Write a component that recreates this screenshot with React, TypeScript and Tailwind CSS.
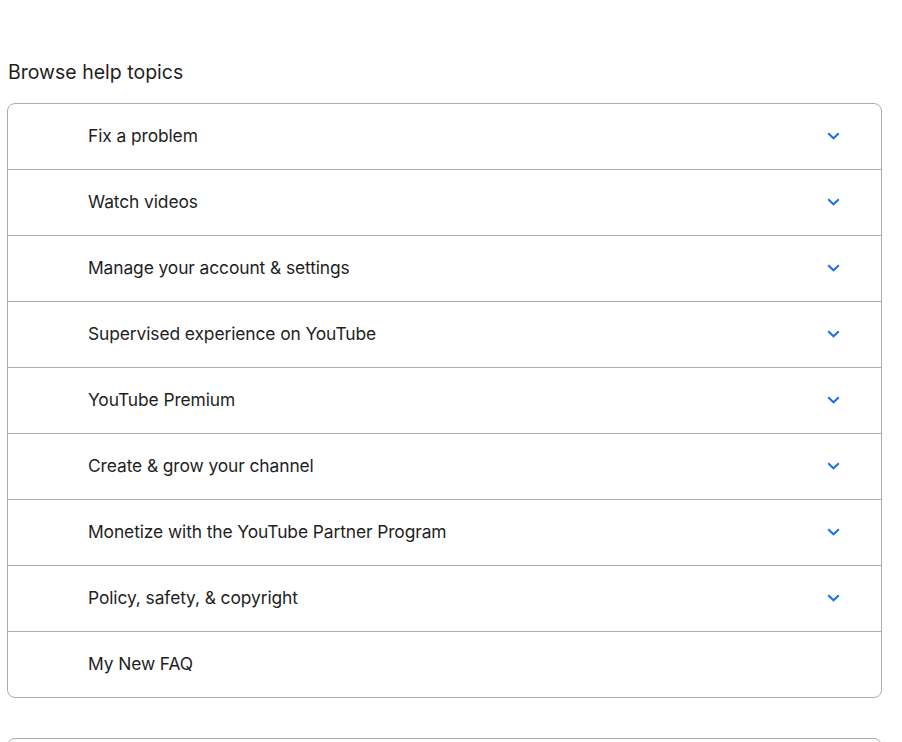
import React from "react";

const topics = [
  { title: "Fix a problem", expandable: true },
  { title: "Watch videos", expandable: true },
  { title: "Manage your account & settings", expandable: true },
  { title: "Supervised experience on YouTube", expandable: true },
  { title: "YouTube Premium", expandable: true },
  { title: "Create & grow your channel", expandable: true },
  { title: "Monetize with the YouTube Partner Program", expandable: true },
  { title: "Policy, safety, & copyright", expandable: true },
  { title: "My New FAQ", expandable: false },
];

function Chevron() {
  return (
    <svg width="13" height="8" viewBox="0 0 13 8" className="text-[#1a73e8] -mt-[2px]">
      <path d="M1.2 1.2L6.5 6.3L11.8 1.2" fill="none" stroke="currentColor" strokeWidth="2.1" />
    </svg>
  );
}

export default function App() {
  return (
    <div className="w-[902px] h-[742px] overflow-hidden bg-white text-[#1f1f1f] font-['Inter','Roboto',sans-serif]">
      <div className="pl-[7px] w-[882px] pt-[59px]">
        <h2 className="text-[19.5px] leading-[27px] font-normal pl-px mb-[17px]">Browse help topics</h2>
        <div className="border border-[#ababab] rounded-lg divide-y divide-[#ababab]">
          {topics.map((t) => (
            <div key={t.title} className="box-content flex items-center h-[65px] pl-[80px] pr-[41px]">
              <span className="flex-1 text-[17.4px] tracking-[-0.1px]">{t.title}</span>
              {t.expandable && <Chevron />}
            </div>
          ))}
        </div>
        <div className="mt-10 h-10 border border-[#ababab] rounded-lg" />
      </div>
    </div>
  );
}
